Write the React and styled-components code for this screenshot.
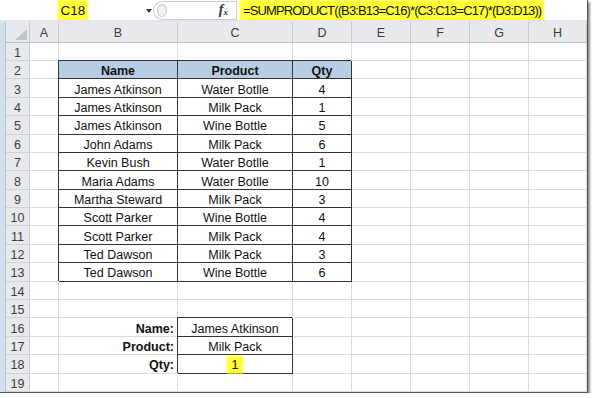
import React from "react";
import styled, { createGlobalStyle } from "styled-components";

const COLS = ["A", "B", "C", "D", "E", "F", "G", "H"];

const data = [
  ["James Atkinson", "Water Botlle", "4"],
  ["James Atkinson", "Milk Pack", "1"],
  ["James Atkinson", "Wine Bottle", "5"],
  ["John Adams", "Milk Pack", "6"],
  ["Kevin Bush", "Water Botlle", "1"],
  ["Maria Adams", "Water Botlle", "10"],
  ["Martha Steward", "Milk Pack", "3"],
  ["Scott Parker", "Wine Bottle", "4"],
  ["Scott Parker", "Milk Pack", "4"],
  ["Ted Dawson", "Milk Pack", "3"],
  ["Ted Dawson", "Wine Bottle", "6"],
];

// builds the cell props for row r (1..19), column index c (0 = A)
const cellFor = (r, c) => {
  const cell = { text: "", align: "center" };
  if (r === 2 && c >= 1 && c <= 3) {
    cell.text = ["Name", "Product", "Qty"][c - 1];
    cell.bold = true;
    cell.fill = true;
    cell.boxed = true;
  }
  if (r >= 3 && r <= 13 && c >= 1 && c <= 3) {
    cell.text = data[r - 3][c - 1];
    cell.boxed = true;
  }
  if (r >= 16 && r <= 18) {
    if (c === 1) {
      cell.text = ["Name:", "Product:", "Qty:"][r - 16];
      cell.bold = true;
      cell.align = "flex-end";
    }
    if (c === 2) {
      cell.boxed = true;
      cell.text = ["James Atkinson", "Milk Pack", ""][r - 16];
      if (r === 18) cell.mark = "1";
    }
  }
  return cell;
};

const App = () => {
  const rows = [];
  for (let r = 1; r <= 19; r++) {
    rows.push(
      <React.Fragment key={r}>
        <RowHead>{r}</RowHead>
        {COLS.map((col, c) => {
          const cell = cellFor(r, c);
          return (
            <Cell
              key={col}
              $align={cell.align}
              $bold={cell.bold}
              $fill={cell.fill}
              $boxed={cell.boxed}
            >
              {cell.mark ? <Mark $small>{cell.mark}</Mark> : cell.text}
            </Cell>
          );
        })}
      </React.Fragment>
    );
  }

  return (
    <>
      <GlobalStyle />
      <Window>
        <FormulaBar>
          <NameBox>
            <NameValue>
              <Mark>C18</Mark>
            </NameValue>
            <Arrow />
          </NameBox>
          <FxArea>
            <Knob />
            <Fx>
              f<sub>x</sub>
            </Fx>
          </FxArea>
          <Formula>
            <Mark $wide>=SUMPRODUCT((B3:B13=C16)*(C3:C13=C17)*(D3:D13))</Mark>
          </Formula>
        </FormulaBar>
        <Band />
        <Sheet>
          <Strip />
          <Grid>
            <Corner>
              <svg width="12" height="11" viewBox="0 0 12 11">
                <polygon points="12,0 12,11 0,11" fill="#c2c6cc" />
              </svg>
            </Corner>
            {COLS.map((col) => (
              <ColHead key={col}>{col}</ColHead>
            ))}
            {rows}
          </Grid>
        </Sheet>
      </Window>
    </>
  );
};

const GlobalStyle = createGlobalStyle`
  html, body {
    margin: 0;
    padding: 0;
    background: #fff;
  }
  body {
    font-family: "Liberation Sans", Arial, sans-serif;
    overflow: hidden;
  }
`;

const Window = styled.div`
  width: 588px;
  height: 393px;
  box-sizing: border-box;
  display: flex;
  flex-direction: column;
  background: #fff;
  border-right: 1px solid #555;
  border-bottom: 1px solid #555;
  box-shadow: 2px 2px 2px rgba(0, 0, 0, 0.45);
  overflow: hidden;
`;

const FormulaBar = styled.div`
  display: flex;
  align-items: center;
  height: 20px;
  background: #fff;
`;

const NameBox = styled.div`
  display: flex;
  align-items: center;
  width: 153px;
  height: 100%;
`;

const NameValue = styled.div`
  width: 146px;
  text-align: center;
  font-size: 13.5px;
  color: #111;
`;

const Arrow = styled.div`
  width: 0;
  height: 0;
  margin-top: 1px;
  border-left: 3px solid transparent;
  border-right: 3px solid transparent;
  border-top: 4px solid #333;
`;

const FxArea = styled.div`
  display: flex;
  align-items: center;
  justify-content: space-between;
  width: 83px;
  height: 19px;
  box-sizing: border-box;
  border: 1px solid #c9ccd1;
  border-right: none;
  border-radius: 10px 0 0 10px;
  padding: 0 8px 0 3px;
`;

const Knob = styled.div`
  width: 8px;
  height: 11px;
  border-radius: 50%;
  border: 1px solid #c4c4c4;
  background: #f1f1f1;
`;

const Fx = styled.span`
  font-family: "Liberation Serif", serif;
  font-style: italic;
  font-weight: bold;
  font-size: 14px;
  color: #333;
  sub {
    font-size: 9px;
    vertical-align: -1px;
  }
`;

const Formula = styled.div`
  flex: 1;
  height: 20px;
  display: flex;
  align-items: center;
  box-sizing: border-box;
  border-left: 1px solid #c9ccd1;
  padding-left: 4px;
  font-size: 13px;
  color: #111;
  white-space: nowrap;
`;

const Mark = styled.span`
  background: #ffff33;
  box-shadow: 0 0 2px 1px rgba(255, 255, 0, 0.85);
  padding: ${(p) => (p.$small ? "1px 4px" : "2px 2px")};
  letter-spacing: ${(p) => (p.$wide ? "-0.87px" : "0")};
`;

const Band = styled.div`
  height: 2px;
  background: #e2e5e9;
`;

const Sheet = styled.div`
  display: flex;
  flex: 1;
`;

const Strip = styled.div`
  width: 6px;
  box-sizing: border-box;
  background: #d2deed;
  border-right: 1px solid #aebfd5;
`;

const Grid = styled.div`
  display: grid;
  grid-template-columns: 24px 29px 119px 115px 59px 59px 59px 59px 58px;
  grid-template-rows: 20.6px repeat(19, 18.4px);
  font-size: 12.5px;
`;

const Head = styled.div`
  box-sizing: border-box;
  display: flex;
  align-items: center;
  justify-content: center;
  background: #e7e9ec;
  border-right: 1px solid #c6cad0;
  border-bottom: 1px solid #b9bec5;
  color: #3c3c3c;
`;

const Corner = styled(Head)`
  align-items: flex-end;
  justify-content: flex-end;
  padding: 0 2px 2px 0;
`;

const ColHead = styled(Head)`
  padding-top: 2px;
`;

const RowHead = styled(Head)`
  padding-top: 3px;
  border-bottom: 1px solid #cfd3d8;
`;

const Cell = styled.div`
  box-sizing: border-box;
  display: flex;
  align-items: center;
  justify-content: ${(p) => p.$align};
  padding: 3px 3px 0;
  white-space: nowrap;
  color: #111;
  font-weight: ${(p) => (p.$bold ? "bold" : "normal")};
  background: ${(p) => (p.$fill ? "#b8cce4" : "#fff")};
  border-right: 1px solid ${(p) => (p.$boxed ? "#333" : "#dadcdd")};
  border-bottom: 1px solid ${(p) => (p.$boxed ? "#333" : "#dadcdd")};
  box-shadow: ${(p) => (p.$boxed ? "-1px -1px 0 #333" : "none")};
`;

export default App;
